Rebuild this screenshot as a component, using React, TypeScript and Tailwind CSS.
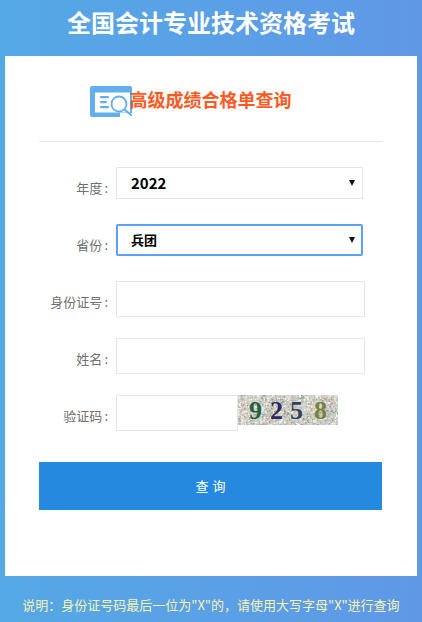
const fontStack = "font-['Microsoft_YaHei','Noto_Sans_CJK_SC','Liberation_Sans',sans-serif]";

const noiseColors = ['#c2a9a0', '#a8d6cc', '#ece9e3', '#9f9a96', '#d6bdb4', '#f4f8f4', '#bcc9c0'];
const rnd = (n: number) => {
  const v = Math.sin(n * 12.9898) * 43758.5453;
  return v - Math.floor(v);
};
const noise = Array.from({ length: 1300 }, (_, i) => ({
  x: Math.floor(rnd(i + 1) * 100),
  y: Math.floor(rnd(i + 2000) * 30),
  fill: noiseColors[Math.floor(rnd(i + 5000) * noiseColors.length)],
}));

function QueryIcon() {
  return (
    <svg width="43" height="32" viewBox="0 0 43 32" className="shrink-0">
      <rect x="0" y="0" width="42" height="31" rx="2" fill="#62aef0" />
      <rect x="5" y="6.5" width="35" height="20" fill="#ffffff" />
      <path d="M30 27 H42 V31 H30 Z" fill="#ffffff" />
      <rect x="10" y="10" width="9" height="2.2" rx="1" fill="#62aef0" />
      <rect x="10" y="15" width="7" height="2.2" rx="1" fill="#62aef0" />
      <rect x="10" y="20" width="9" height="2.2" rx="1" fill="#62aef0" />
      <circle cx="29" cy="18" r="7.5" fill="#ffffff" stroke="#62aef0" strokeWidth="1.8" />
      <path d="M35 24 L41 29" stroke="#62aef0" strokeWidth="2.2" strokeLinecap="round" />
    </svg>
  );
}

function Captcha() {
  return (
    <svg width="100" height="30" viewBox="0 0 100 30" className="shrink-0">
      <rect width="100" height="30" fill="#d6d2ca" />
      {noise.map((n, i) => (
        <rect key={i} x={n.x} y={n.y} width="1.5" height="1.5" fill={n.fill} />
      ))}
      <text x="11" y="24" fontFamily="Liberation Serif" fontWeight="bold" fontSize="26" fill="#1f6340">9</text>
      <text x="32" y="24" fontFamily="Liberation Serif" fontWeight="bold" fontSize="26" fill="#2b2a63">2</text>
      <text x="52" y="24" fontFamily="Liberation Serif" fontWeight="bold" fontSize="26" fill="#35405c">5</text>
      <text x="76" y="24" fontFamily="Liberation Serif" fontWeight="bold" fontSize="26" fill="#77803c">8</text>
    </svg>
  );
}

function Label({ text, offset }: { text: string; offset: string }) {
  return (
    <label className={`w-[69px] mr-2 shrink-0 text-right text-[13px] leading-[20px] text-[#707070] ${offset}`}>
      {text}
      <span className="ml-[2px]">:</span>
    </label>
  );
}

function Arrow() {
  return (
    <svg width="6" height="6" viewBox="0 0 6 6" className="pointer-events-none absolute top-[13px] right-[8px]">
      <path d="M0 0 H6 L3 6 Z" fill="#111111" />
    </svg>
  );
}

export default function App() {
  return (
    <div className={`h-[622px] w-full flex flex-col bg-gradient-to-r from-[#54a8e6] to-[#6098e6] ${fontStack}`}>
      <h1 className="h-14 shrink-0 text-center text-2xl leading-[44px] font-bold text-white">
        全国会计专业技术资格考试
      </h1>

      <main className="mx-[5px] h-[520px] shrink-0 bg-white pr-[35px] pl-[34px]">
        <div className="flex h-[86px] items-start justify-center border-b border-[#e6e6e6] pt-[30px] pr-[40px]">
          <QueryIcon />
          <span className="-ml-[3px] text-lg leading-[26px] font-bold text-[#ff5a1f]">高级成绩合格单查询</span>
        </div>

        <form>
          <div className="mt-[25px] flex items-start">
            <Label text="年度" offset="mt-[11px]" />
            <div className="relative">
              <select
                defaultValue="2022"
                className="block h-8 w-[247px] appearance-none border border-[#e6e6e6] bg-white pl-[14px] text-[15px] font-bold text-black outline-none"
              >
                <option value="2022">2022</option>
                <option value="2021">2021</option>
              </select>
              <Arrow />
            </div>
          </div>

          <div className="mt-[25px] flex items-start">
            <Label text="省份" offset="mt-[11px]" />
            <div className="relative">
              <select
                defaultValue="兵团"
                className="block h-8 w-[247px] appearance-none rounded-[2px] border-2 border-[#5aa2f8] bg-white pl-[13px] text-[13px] font-bold text-black outline-none"
              >
                <option value="兵团">兵团</option>
                <option value="北京">北京</option>
              </select>
              <Arrow />
            </div>
          </div>

          <div className="mt-[25px] flex items-start">
            <Label text="身份证号" offset="mt-[11px]" />
            <input className="h-9 w-[249px] border border-[#e6e6e6] outline-none" />
          </div>

          <div className="mt-[21px] flex items-start">
            <Label text="姓名" offset="mt-[11px]" />
            <input className="h-9 w-[249px] border border-[#e6e6e6] outline-none" />
          </div>

          <div className="mt-[21px] flex items-start">
            <Label text="验证码" offset="mt-[11px]" />
            <input className="h-9 w-[122px] border border-[#e6e6e6] outline-none" />
            <Captcha />
          </div>

          <button
            type="button"
            className="mt-[31px] h-12 w-full bg-[#2589e0] pl-[4px] text-[13px] tracking-[4px] text-white"
          >
            查询
          </button>
        </form>
      </main>

      <p className="flex-1 pt-[21px] text-center text-[13px] leading-[16px] whitespace-nowrap text-[#f5f3b4]">
        {'说明\uFF1A身份证号码最后一位为"X"的\uFF0C请使用大写字母"X"进行查询'}
      </p>
    </div>
  );
}
